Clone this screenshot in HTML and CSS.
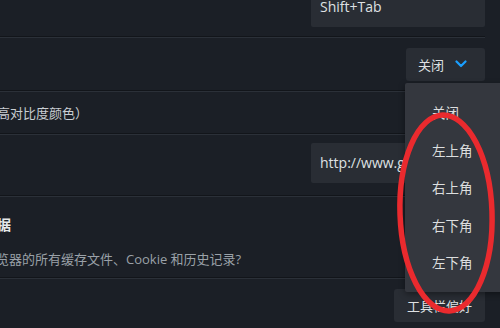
FILE: index.html
```html
<!DOCTYPE html>
<html lang="zh-CN">
<head>
  <meta charset="UTF-8" />
  <title>浏览器设置</title>
  <link rel="stylesheet" href="styles.css">
</head>
<body>

  <div class="settings">
    <div class="row row-shortcut">
      <div class="field">Shift+Tab</div>
    </div>
    <div class="divider"></div>

    <div class="row row-select">
      <button class="select-btn">
        关闭
        <svg class="chevron" width="12" height="8" viewBox="0 0 12 8">
          <path d="M1.5 1.5 L6 6 L10.5 1.5" fill="none" stroke="#1a9fff" stroke-width="2.2" stroke-linecap="round" stroke-linejoin="round"/>
        </svg>
      </button>
    </div>
    <div class="divider"></div>

    <div class="row row-contrast">
      <span class="label">高对比度颜色）</span>
    </div>
    <div class="divider"></div>

    <div class="row row-home">
      <div class="field field-url">http://www.google.com</div>
    </div>
    <div class="divider"></div>

    <div class="row row-clear">
      <div class="title">据</div>
      <div class="desc">览器的所有缓存文件、Cookie 和历史记录?</div>
    </div>
    <div class="divider"></div>

    <div class="row row-toolbar">
      <button class="btn">工具栏偏好</button>
    </div>
  </div>

  <!-- 下拉菜单 -->
  <ul class="dropdown">
    <li>关闭</li>
    <li>左上角</li>
    <li>右上角</li>
    <li>右下角</li>
    <li>左下角</li>
  </ul>

  <!-- 红色圈注 -->
  <svg class="circle-mark" width="500" height="328" viewBox="0 0 500 328">
    <ellipse cx="446" cy="213" rx="46" ry="98" fill="none" stroke="#ea2a2e" stroke-width="5.5" transform="rotate(-2 446 213)"/>
  </svg>

</body>
</html>
```

FILE: styles.css
```css
body {
  margin: 0;
  width: 500px;
  height: 328px;
  overflow: hidden;
  background-color: #1b1f26;
  font-family: "Open Sans", "Noto Sans CJK SC", sans-serif;
  color: #dcdee0;
  position: relative;
}

.settings {
  width: 485px;
  margin-top: -13px;
}

.row {
  display: flex;
  flex-direction: column;
  align-items: flex-end;
}

.divider {
  height: 1px;
  border-top: 1px solid #12151a;
  background-color: #2b3038;
}

.field {
  width: 174px;
  height: 40px;
  box-sizing: border-box;
  padding-left: 9px;
  background-color: #292d34;
  border-radius: 2px;
  font-size: 14px;
  line-height: 40px;
  color: #dfe1e3;
  white-space: nowrap;
  overflow: hidden;
}

.row-shortcut {
  padding-bottom: 9px;
}

.row-select {
  padding: 10px 0 9px;
}

.select-btn {
  display: flex;
  align-items: center;
  width: 79px;
  height: 33px;
  padding: 0 0 0 12px;
  border: none;
  border-radius: 3px;
  background-color: #292d34;
  color: #dfe1e3;
  font-family: "Noto Sans CJK SC", sans-serif;
  font-size: 13px;
}

.chevron {
  margin-left: 11px;
  margin-top: -2px;
}

.row-contrast {
  height: 41px;
  align-items: flex-start;
  justify-content: center;
}

.label {
  margin-left: -3px;
  font-family: "Noto Sans CJK SC", sans-serif;
  font-size: 13px;
  color: #c9ced3;
}

.row-home {
  padding: 8px 0 12px;
}

.row-clear {
  height: 80px;
  align-items: flex-start;
}

.title {
  margin: 17px 0 0 -3px;
  font-family: "Noto Sans CJK SC", sans-serif;
  font-size: 14px;
  font-weight: bold;
  color: #e6e8ea;
}

.desc {
  margin: 15px 0 0 -4px;
  font-size: 13px;
  color: #9aa1a8;
  white-space: nowrap;
}

.row-toolbar {
  padding-top: 10px;
}

.btn {
  width: 91px;
  height: 33px;
  border: none;
  border-radius: 3px;
  background-color: #292d34;
  color: #dfe1e3;
  font-family: "Noto Sans CJK SC", sans-serif;
  font-size: 13px;
}

/* 下拉菜单 */
.dropdown {
  position: absolute;
  left: 405px;
  top: 83px;
  width: 110px;
  height: 209px;
  box-sizing: border-box;
  margin: 0;
  padding: 11px 0 0 27px;
  list-style: none;
  background-color: #34373e;
  border-radius: 2px;
  box-shadow: 0 2px 6px rgba(0, 0, 0, 0.4);
}

.dropdown li {
  height: 37.5px;
  line-height: 37.5px;
  font-family: "Noto Sans CJK SC", sans-serif;
  font-size: 13.5px;
  color: #dcdedf;
}

.circle-mark {
  position: absolute;
  left: 0;
  top: 0;
  pointer-events: none;
}
```
